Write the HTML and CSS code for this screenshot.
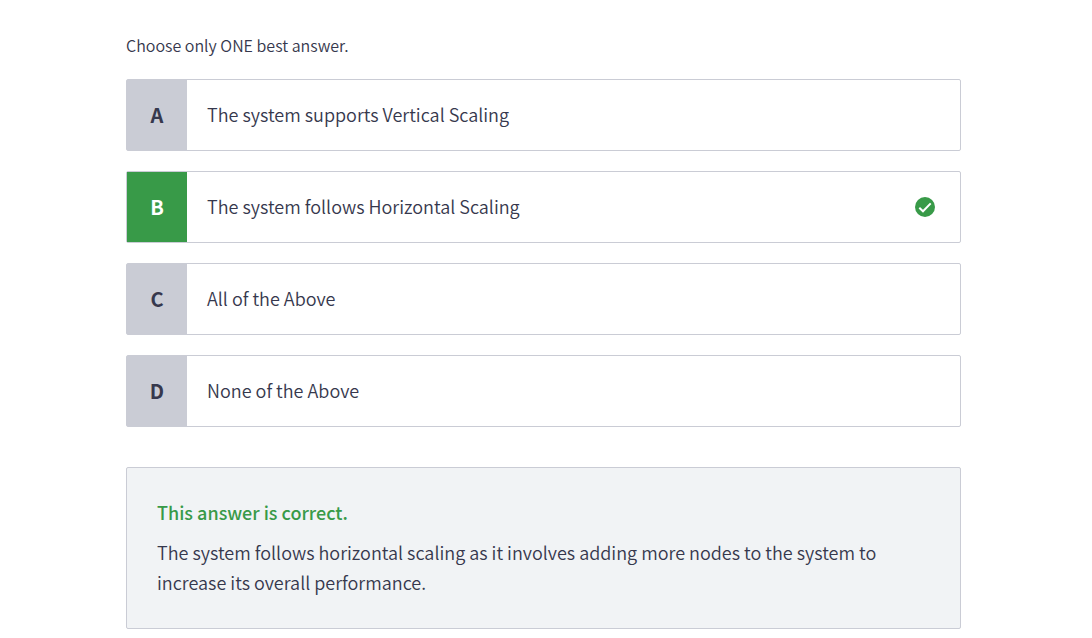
FILE: index.html
```html
<!DOCTYPE html>
<html lang="en">
<head>
<meta charset="utf-8">
<meta name="viewport" content="width=device-width, initial-scale=1">
<title>Quiz question</title>
<link rel="stylesheet" href="styles.css">
</head>
<body>
<main class="quiz">
  <p class="hint">Choose only ONE best answer.</p>
  <div class="options">
    <button type="button" class="option"><span class="letter">A</span><span class="label">The system supports Vertical Scaling</span></button>
    <button type="button" class="option option-correct" aria-pressed="true"><span class="letter">B</span><span class="label">The system follows Horizontal Scaling</span>
      <svg class="check" viewBox="0 0 20 20" aria-hidden="true"><circle cx="10" cy="10" r="10" fill="#389a48"/><path d="M4.3 10.7l3.7 3.6L15.7 6.4" fill="none" stroke="#fff" stroke-width="2"/></svg>
    </button>
    <button type="button" class="option"><span class="letter">C</span><span class="label">All of the Above</span></button>
    <button type="button" class="option"><span class="letter">D</span><span class="label">None of the Above</span></button>
  </div>
  <section class="result">
    <h2 class="result-title">This answer is correct.</h2>
    <p class="result-text">The system follows horizontal scaling as it involves adding more nodes to the system to increase its overall performance.</p>
  </section>
</main>
</body>
</html>
```
FILE: styles.css
```css
* { box-sizing: border-box; }
body {
  margin: 0;
  padding: 33px 131px 9px 126px;
  background: #fff;
  color: #36384d;
  font-family: "Noto Sans CJK SC", "Noto Sans", sans-serif;
  font-size: 18px;
  font-weight: 350;
}
.hint { margin: 0 0 22px; font-size: 16px; line-height: 24px; }
.options { display: flex; flex-direction: column; gap: 20px; }
.option {
  display: flex;
  align-items: stretch;
  width: 100%;
  min-height: 72px;
  padding: 0;
  border: 1px solid #caccd5;
  border-radius: 2px;
  background: #fff;
  color: inherit;
  font: inherit;
  line-height: 30px;
  text-align: left;
  cursor: pointer;
}
.letter {
  display: flex;
  flex: none;
  align-items: center;
  justify-content: center;
  width: 60px;
  background: #caccd5;
  font-size: 20px;
  font-weight: 700;
}
.label { flex: 1; align-self: center; padding: 0 20px 2px; }
.option-correct .letter { background: #389a48; color: #fff; }
.check { flex: none; align-self: center; width: 20px; height: 20px; margin-right: 25px; }
.result {
  margin-top: 40px;
  padding: 29px 30px 31px;
  border: 1px solid #caccd5;
  border-radius: 2px;
  background: #f1f3f5;
  line-height: 30px;
}
.result-title { margin: 0 0 10px; color: #389a48; font-size: 18px; font-weight: 500; }
.result-text { margin: 0; }
```
